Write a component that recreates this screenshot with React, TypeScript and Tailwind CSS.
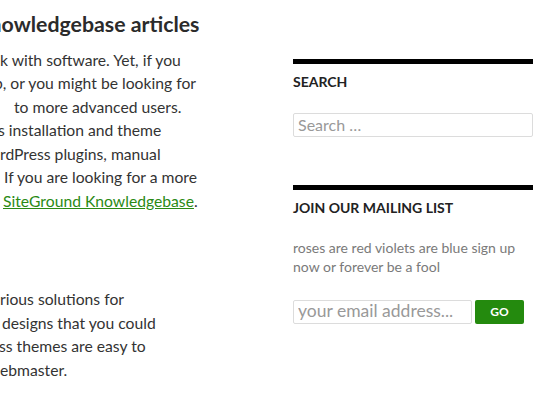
import React from 'react';

const lato = { fontFamily: 'Lato, "Noto Sans", sans-serif' };

const para1 = [
  { text: 'k with software. Yet, if you', ml: 'ml-0' },
  { text: 'p, or you might be looking for', ml: 'ml-[-6px]' },
  { text: 'to more advanced users.', ml: 'ml-[14px]' },
  { text: 's installation and theme', ml: 'ml-[-2px]' },
  { text: 'rdPress plugins, manual', ml: 'ml-0' },
  { text: 'If you are looking for a more', ml: 'ml-[4px]' },
];

const para2 = [
  { text: 'rious solutions for', ml: 'ml-0' },
  { text: 'designs that you could', ml: 'ml-[2px]' },
  { text: 'ss themes are easy to', ml: 'ml-[-1px]' },
  { text: 'ebmaster.', ml: 'ml-0' },
];

const App = () => {
  return (
    <div className="w-[558px] h-[411px] overflow-hidden bg-white flex font-['Lato',sans-serif]" style={lato}>
      <main className="w-[293px] shrink-0 pt-[12px] text-[#333]">
        <h1 className="ml-[-25px] whitespace-nowrap text-[21.3px] leading-[1.2] font-bold text-[#2b2b2b]">
          Knowledgebase articles
        </h1>
        <div className="mt-[11px] text-[15.7px] leading-[23.5px]">
          {para1.map((l) => (
            <div key={l.text} className={`whitespace-nowrap ${l.ml}`}>{l.text}</div>
          ))}
          <div className="whitespace-nowrap ml-[3px]">
            <a href="#" className="text-[#2a8a14] underline">SiteGround Knowledgebase</a>.
          </div>
        </div>
        <div className="mt-[75px] text-[15.7px] leading-[23.5px]">
          {para2.map((l) => (
            <div key={l.text} className={`whitespace-nowrap ${l.ml}`}>{l.text}</div>
          ))}
        </div>
      </main>

      <aside className="w-[240px] shrink-0 pt-[59px]">
        <section>
          <div className="h-[5px] bg-black" />
          <h2 className="mt-[10px] text-[14px] leading-[1.2] font-bold uppercase text-[#222]">Search</h2>
          <input
            type="search"
            placeholder="Search …"
            className="mt-[22px] block w-full h-[24px] border border-[#dcdcdc] rounded-[2px] px-[4px] text-[16px] placeholder:text-[#999] outline-none"
          />
        </section>
        <section className="mt-[48px]">
          <div className="h-[5px] bg-black" />
          <h2 className="mt-[10px] text-[14px] leading-[1.2] font-bold uppercase text-[#222]">Join our mailing list</h2>
          <p className="mt-[21px] text-[14px] leading-[19px] text-[#7a7a7a]">
            roses are red violets are blue sign up now or forever be a fool
          </p>
          <form className="mt-[24px] flex gap-[3px]" onSubmit={(e) => e.preventDefault()}>
            <input
              type="email"
              placeholder="your email address..."
              className="w-[179px] h-[24px] border border-[#dcdcdc] rounded-[2px] px-[4px] text-[17.5px] placeholder:text-[#999] outline-none"
            />
            <button className="w-[49px] h-[24px] rounded-[2px] bg-[#248a0e] text-white text-[12px] font-bold uppercase">
              Go
            </button>
          </form>
        </section>
      </aside>
    </div>
  );
};

export default App;
